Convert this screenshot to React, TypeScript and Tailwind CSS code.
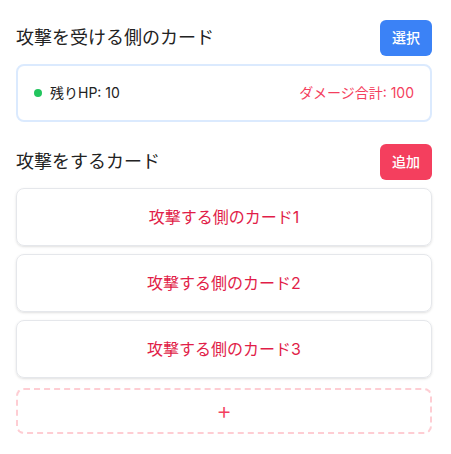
const cards = ['攻撃する側のカード1', '攻撃する側のカード2', '攻撃する側のカード3'];

const App = () => {
  return (
    <div
      className="w-[451px] min-h-[454px] bg-white pl-4 pr-[19px] pt-5 pb-4 text-gray-800"
      style={{ fontFamily: "Inter, 'Noto Sans CJK JP', sans-serif" }}
    >
      {/* defender */}
      <div className="flex items-center justify-between mb-2">
        <h2 className="text-lg text-[#222]">攻撃を受ける側のカード</h2>
        <button className="h-9 px-3 rounded-md bg-[#3b82f6] text-white text-sm font-medium">選択</button>
      </div>
      <div className="flex items-center justify-between rounded-lg border-2 border-[#dbeafe] px-4 py-[17px] text-sm">
        <div className="flex items-center gap-2">
          <span className="w-2 h-2 rounded-full bg-[#22c55e]"></span>
          <span className="text-[#222]">残りHP: 10</span>
        </div>
        <span className="text-[#f43f5e]">ダメージ合計: 100</span>
      </div>

      {/* attackers */}
      <div className="flex items-center justify-between mt-[22px] mb-2">
        <h2 className="text-lg text-[#222]">攻撃をするカード</h2>
        <button className="h-9 px-3 rounded-md bg-[#f43f5e] text-white text-sm font-medium">追加</button>
      </div>
      <div className="flex flex-col gap-2">
        {cards.map((c) => (
          <div
            key={c}
            className="rounded-lg border border-gray-200 shadow-sm py-4 text-center text-base text-[#e11d48]"
          >
            {c}
          </div>
        ))}
        <div className="h-[46px] mt-0.5 flex items-center justify-center rounded-lg border-2 border-dashed border-[#fecdd3] text-2xl font-light text-[#f43f5e]">
          +
        </div>
      </div>
    </div>
  );
};

export default App;
